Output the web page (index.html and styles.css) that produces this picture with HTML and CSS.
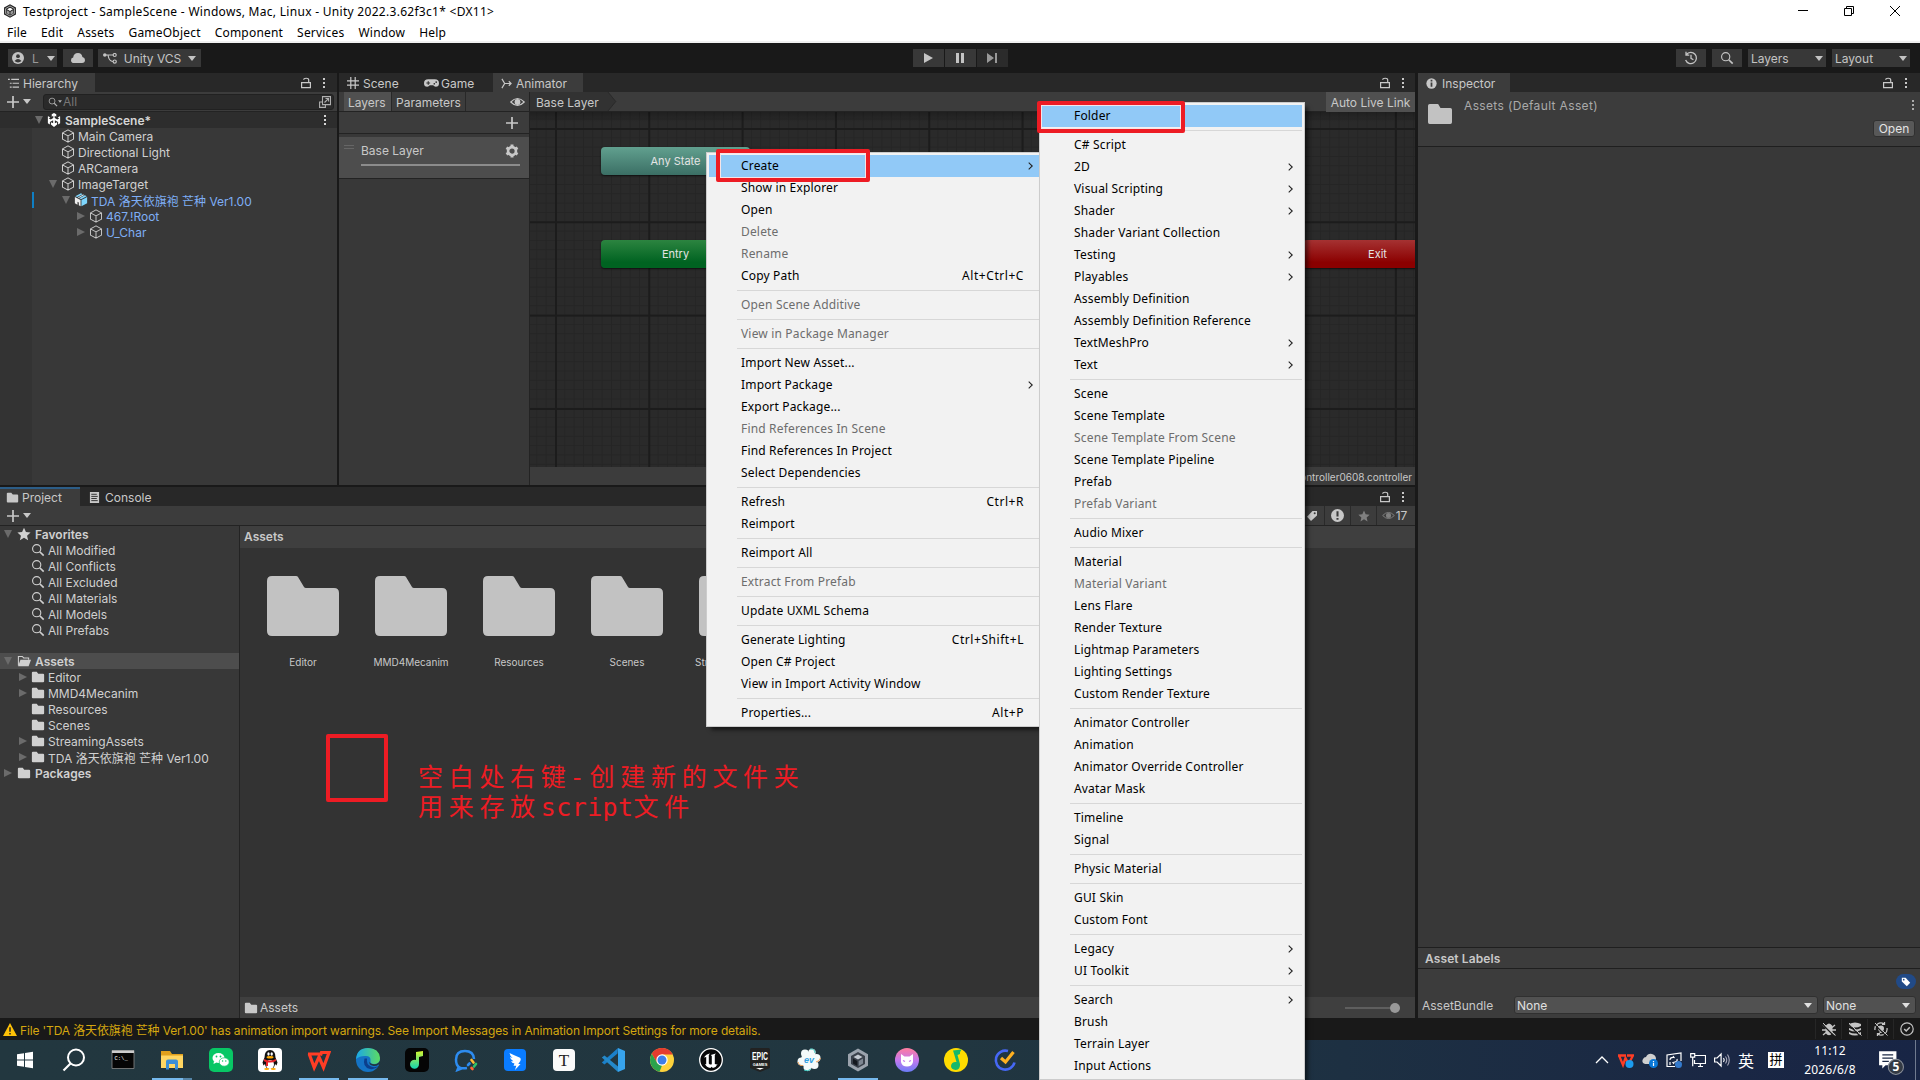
FILE: index.html
```html
<!DOCTYPE html>
<html lang="zh-CN">
<head>
  <meta charset="UTF-8">
  <meta name="viewport" content="width=device-width, initial-scale=1.0">
  <title>Testproject - SampleScene - Unity</title>
  <link rel="stylesheet" href="styles.css">
</head>
<body>
  <!-- icon sprite -->
  <svg class="sprite" aria-hidden="true">
    <symbol id="unity" viewBox="0 0 16 16"><path fill="currentColor" d="M8 0l2.600 1.500v2.700L8.800 3.100v2.700l2.900 1.700 2.400-1.400-1.900-1L14.500 3.800 15 4v7.800l-2.300 1.300v-2.800L9 8.300v3.500l2.500-1.300v2.600L8 16l-3.500-2.900v-2.600L7 11.800V8.300L3.300 10.300v2.800L1 11.800V4l.5-.2 2.300 1.300-1.900 1 2.400 1.400 2.900-1.700V3.100L5.400 4.200V1.500z"/></symbol>
    <symbol id="hex" viewBox="0 0 16 16"><path fill="#222" d="M8 .3l6.800 3.800v7.800L8 15.700 1.200 11.900V4.100z"/><path fill="none" stroke="#bbb" stroke-width="1" d="M8 2.300l5 2.900v5.700l-5 2.900-5-2.900V5.200z"/><path fill="#fff" d="M8 4.200l3.300 1.900L8 8 4.700 6.100z"/><path fill="#999" d="M4.300 7L7.500 8.800v3.600L4.300 10.600zM11.700 7L8.500 8.800v3.600l3.200-1.800z"/></symbol>
    <symbol id="cube" viewBox="0 0 16 16"><path fill="none" stroke="currentColor" stroke-width="1.150" stroke-linejoin="round" d="M8 1l6.300 3.400v7.200L8 15 1.700 11.600V4.400zM1.700 4.400L8 7.800l6.300-3.400M8 7.800V15"/></symbol>
    <symbol id="prefab" viewBox="0 0 16 16"><path fill="#7fd6fd" d="M8.500 8L15 4.500v7.200L8.500 15.200z"/><path fill="#ededed" d="M7.500 8L1 4.500v7.200l3 1.600V10l1.500.8v3.300l2 1.100z"/><path fill="#7fd6fd" d="M1.500 3.600L8 .3l1.800 1L3.600 4.700zM6.200 6L12.400 2.700l2.100 1L8 7.100z"/><path fill="#d8f2fd" d="M4.300 5L10.500 1.700l1.200.6L5.500 5.600z"/></symbol>
    <symbol id="folder" viewBox="0 0 16 16"><path fill="currentColor" d="M1 3.200Q1 2 2.200 2h4.300l1.800 2.200h5.500q1.200 0 1.200 1.200v7.400q0 1.200-1.200 1.200H2.200Q1 14 1 12.800z"/></symbol>
    <symbol id="folder-open" viewBox="0 0 16 16"><path fill="none" stroke="currentColor" stroke-width="1.200" d="M1.600 13V2.800h4.500l1.500 1.700h5.700v2"/><path fill="currentColor" d="M4 6.600h12L13.300 14H1.200z"/></symbol>
    <symbol id="big-folder" viewBox="0 0 72 60"><path fill="#c2c2c2" d="M0 5q0-5 5-5h24q1.500 0 2 1l6 10q.6 1 2 1h28q5 0 5 5v38q0 5-5 5H5q-5 0-5-5z"/></symbol>
    <symbol id="search" viewBox="0 0 16 16"><circle cx="6.500" cy="6.500" r="4.700" fill="none" stroke="currentColor" stroke-width="1.300"/><path stroke="currentColor" stroke-width="1.900" d="M10 10l4.500 4.500"/></symbol>
    <symbol id="star" viewBox="0 0 16 16"><path fill="currentColor" d="M8 .8l2.200 5 5.300.5-4 3.600 1.200 5.300L8 12.400l-4.700 2.800 1.200-5.300-4-3.600 5.300-.5z"/></symbol>
    <symbol id="lock" viewBox="0 0 12 12"><path fill="none" stroke="currentColor" stroke-width="1.200" d="M1.600 5.600h8.800v5H1.600zM3.700 2.800C3.700.8 8.700.6 8.700 3v2.600"/></symbol>
    <symbol id="dots" viewBox="0 0 4 12"><path fill="currentColor" d="M1 1h2v2H1zM1 5h2v2H1zM1 9h2v2H1z"/></symbol>
    <symbol id="plus" viewBox="0 0 12 12"><path stroke="currentColor" stroke-width="1.700" d="M6 0v12M0 6h12"/></symbol>
    <symbol id="down" viewBox="0 0 8 5"><path fill="currentColor" d="M0 0h8L4 5z"/></symbol>
    <symbol id="list" viewBox="0 0 12 12"><path stroke="currentColor" stroke-width="1.200" d="M0 1.500h2M3.500 1.500H12M2 5.800h2M5 5.800h7M2 10h2M5 10h7"/></symbol>
    <symbol id="grid" viewBox="0 0 12 12"><path stroke="currentColor" stroke-width="1.200" d="M3.800 0v12M8.200 0v12M0 3.800h12M0 8.200h12"/></symbol>
    <symbol id="pad" viewBox="0 0 16 10"><path fill="currentColor" d="M4.500 1h7Q16 1 16 5.200 16 9 12.500 9 10.800 9 9.800 7.500H6.200Q5.200 9 3.500 9 0 9 0 5.200 0 1 4.500 1z"/><path stroke="#282828" d="M4.500 3v4M2.500 5h4"/><circle cx="11" cy="5.800" r=".9" fill="#282828"/><circle cx="13" cy="4" r=".9" fill="#282828"/></symbol>
    <symbol id="animator" viewBox="0 0 12 12"><path fill="none" stroke="currentColor" stroke-width="1.300" d="M1 1l3 5-3 5M4 6h7M8.500 3.500L11 6 8.500 8.500"/></symbol>
    <symbol id="eye" viewBox="0 0 16 10"><path fill="none" stroke="currentColor" stroke-width="1.200" d="M.8 5Q8-2.500 15.200 5 8 12.500.8 5z"/><circle cx="8" cy="5" r="3.100" fill="currentColor"/></symbol>
    <symbol id="gear" viewBox="0 0 16 16"><circle cx="8" cy="8" r="4.500" fill="none" stroke="currentColor" stroke-width="3"/><path stroke="currentColor" stroke-width="3.400" d="M8 .6v3M8 12.400v3M1.600 4.300l2.600 1.500M11.800 10.200l2.600 1.500M1.600 11.700l2.600-1.500M11.800 5.800l2.600-1.500"/></symbol>
    <symbol id="user" viewBox="0 0 12 12"><circle cx="6" cy="6" r="6" fill="currentColor"/><circle cx="6" cy="4.200" r="1.900" fill="#383838"/><path fill="#383838" d="M2.500 9Q6 5.200 9.500 9 6 11.800 2.500 9z"/></symbol>
    <symbol id="cloud" viewBox="0 0 14 10"><path fill="currentColor" d="M3 10Q0 10 0 7.200 0 5 2.200 4.600 2.600 0 7 0q3.800 0 4.400 4Q14 4.600 14 7q0 3-3 3z"/></symbol>
    <symbol id="branch" viewBox="0 0 14 11"><g fill="none" stroke="currentColor" stroke-width="1.200"><path d="M2 2h8M5 2q1 6.500 5 6.500"/><circle cx="11.700" cy="2" r="1.500"/><circle cx="11.700" cy="8.600" r="1.600"/></g><circle cx="1.800" cy="2" r="1.800" fill="currentColor"/></symbol>
    <symbol id="history" viewBox="0 0 14 14"><path fill="none" stroke="currentColor" stroke-width="1.300" d="M2.400 3.500A5.600 5.600 0 1 1 1.600 9M2 .8v3.400h3.300M7 3.800v3.600l2.400 1.400"/></symbol>
    <symbol id="info" viewBox="0 0 12 12"><circle cx="6" cy="6" r="5.600" fill="currentColor"/><path stroke="#3c3c3c" stroke-width="1.900" d="M6 2v1.800M6 5v4.600"/></symbol>
    <symbol id="alert" viewBox="0 0 12 12"><circle cx="6" cy="6" r="6" fill="currentColor"/><path stroke="#3c3c3c" stroke-width="1.900" d="M6 2v5M6 8.200V10"/></symbol>
    <symbol id="tag" viewBox="0 0 12 12"><path fill="currentColor" d="M1 1h4.500L11 6.800 7 11 1 5.500z"/><circle cx="3.300" cy="3.200" r="1" fill="#214a87"/></symbol>
    <symbol id="tag-flip" viewBox="0 0 12 12"><path fill="currentColor" d="M11 1H6.500L1 6.800 5 11l6-5.500z"/><circle cx="8.700" cy="3.200" r="1" fill="#3c3c3c"/></symbol>
    <symbol id="doc" viewBox="0 0 12 12"><path fill="currentColor" d="M1 0h10v12H1z"/><path stroke="#282828" d="M2.500 2.500h6M2.500 4.800h7M2.500 7.100h6M2.500 9.400h7"/></symbol>
    <symbol id="popout" viewBox="0 0 12 12"><path fill="none" stroke="currentColor" stroke-width="1.100" d="M3.500.6h8v8h-8zM3.500 6H.6v5.400h5.800V8.600M5.500 6.500L9.500 2.600M6.500 2.500h3.100v3"/></symbol>
    <symbol id="warn" viewBox="0 0 14 13"><path fill="#ffc107" d="M7 0l7 13H0z"/><path stroke="#222" stroke-width="1.500" d="M7 4.200v4.500M7 10v1.600"/></symbol>
    <symbol id="bug-off" viewBox="0 0 14 14"><path fill="currentColor" d="M3.500 4q3.500-5 7 0v7q-3.500 4.500-7 0z"/><path stroke="currentColor" stroke-width="1.300" d="M1 3l3 2.500M0 8h4M1 13l3-2.500M13 3l-3 2.500M14 8h-4M13 13l-3-2.500"/><path stroke="#191919" stroke-width="1.200" d="M0 2l12 12"/><path stroke="currentColor" d="M1 1l12.500 12.500"/></symbol>
    <symbol id="db-off" viewBox="0 0 14 14"><path fill="currentColor" d="M1 2q6-3 12 0v2q-6 3-12 0zM1 6q6 3 12 0v2q-6 3-12 0zM1 10q6 3 12 0v2q-6 3-12 0z"/><path stroke="#191919" stroke-width="1.200" d="M0 2l12 12"/><path stroke="currentColor" d="M1 1l12.500 12.500"/></symbol>
    <symbol id="bulb-off" viewBox="0 0 14 14"><path fill="none" stroke="currentColor" stroke-width="1.300" d="M1 8a6 6 0 0 1 9-6.200M13 6a6 6 0 0 1-9 6.200M10.500 0v2.300H8M3.500 14v-2.300H6"/><circle cx="7" cy="6.500" r="3" fill="currentColor"/><path fill="currentColor" d="M5.500 9h3v2h-3z"/><path stroke="#191919" stroke-width="1.200" d="M0 2l12 12"/><path stroke="currentColor" d="M1 1l12.500 12.500"/></symbol>
    <symbol id="check-circle" viewBox="0 0 14 14"><circle cx="7" cy="7" r="6.200" fill="none" stroke="currentColor" stroke-width="1.200"/><path fill="none" stroke="currentColor" stroke-width="1.500" d="M4.200 7l2 2 3.600-3.800"/></symbol>
  </svg>

  <div class="window">
    <div class="titlebar">
      <svg class="i14"><use href="#hex"/></svg>
      <span class="title">Testproject - SampleScene - Windows, Mac, Linux - Unity 2022.3.62f3c1* &lt;DX11&gt;</span>
      <svg class="win-btn" viewBox="0 0 12 12"><path stroke="#000" d="M1 5.500h10"/></svg>
      <svg class="win-btn" viewBox="0 0 12 12"><path fill="none" stroke="#000" d="M1.500 3.500h7v7h-7zM3.500 3.500v-2h7v7h-2"/></svg>
      <svg class="win-btn" viewBox="0 0 12 12"><path stroke="#000" d="M1 1l10 10M11 1L1 11"/></svg>
    </div>
    <nav class="menubar"><span>File</span><span>Edit</span><span>Assets</span><span>GameObject</span><span>Component</span><span>Services</span><span>Window</span><span>Help</span></nav>

    <div class="toolbar">
      <div class="tool-side">
        <button class="tb account"><svg class="i12"><use href="#user"/></svg>L<svg class="arrow"><use href="#down"/></svg></button>
        <button class="tb cloud"><svg class="cloud-ico"><use href="#cloud"/></svg></button>
        <button class="tb vcs"><svg class="branch-ico"><use href="#branch"/></svg>Unity VCS<svg class="arrow"><use href="#down"/></svg></button>
      </div>
      <div class="play">
        <button class="tb"><svg viewBox="0 0 12 12" class="i12"><path fill="#c4c4c4" d="M2 1l9 5-9 5z"/></svg></button>
        <button class="tb"><svg viewBox="0 0 12 12" class="i12"><path fill="#c4c4c4" d="M2 1h3v10H2zM7 1h3v10H7z"/></svg></button>
        <button class="tb off"><svg viewBox="0 0 12 12" class="i12"><path fill="#999" d="M1 1l7 5-7 5zM9 1h2v10H9z"/></svg></button>
      </div>
      <div class="tool-side right">
        <button class="tb sq"><svg class="i14"><use href="#history"/></svg></button>
        <button class="tb sq"><svg class="i14"><use href="#search"/></svg></button>
        <button class="tb drop">Layers<svg class="arrow"><use href="#down"/></svg></button>
        <button class="tb drop">Layout<svg class="arrow"><use href="#down"/></svg></button>
      </div>
    </div>

    <div class="workspace">
      <div class="left">
        <div class="upper">
          <section class="panel hierarchy">
            <div class="tabs">
              <div class="tab active"><svg class="i11"><use href="#list"/></svg>Hierarchy</div>
              <svg class="lock"><use href="#lock"/></svg><svg class="dots"><use href="#dots"/></svg>
            </div>
            <div class="bar">
              <svg class="plus"><use href="#plus"/></svg><svg class="arrow"><use href="#down"/></svg>
              <div class="search"><svg class="i10"><use href="#search"/></svg><svg class="tiny"><use href="#down"/></svg><span>All</span><svg class="pop"><use href="#popout"/></svg></div>
            </div>
            <div class="scene-row"><i class="fold open"></i><svg class="i14 white"><use href="#unity"/></svg><b>SampleScene*</b><svg class="dots"><use href="#dots"/></svg></div>
            <div class="tree" id="hierarchy"></div>
          </section>

          <section class="panel animator">
            <div class="tabs">
              <div class="tab scene"><svg class="i12"><use href="#grid"/></svg>Scene</div>
              <div class="tab game"><svg class="pad"><use href="#pad"/></svg>Game</div>
              <div class="tab active anim"><svg class="i11"><use href="#animator"/></svg>Animator</div>
              <svg class="lock"><use href="#lock"/></svg><svg class="dots"><use href="#dots"/></svg>
            </div>
            <div class="anim-body">
              <div class="layers">
                <div class="bar layer-tabs"><span class="on">Layers</span><span>Parameters</span><svg class="eye"><use href="#eye"/></svg></div>
                <div class="add-row"><svg class="plus"><use href="#plus"/></svg></div>
                <div class="layer">
                  <div class="layer-top"><i class="grip"></i>Base Layer<svg class="i14"><use href="#gear"/></svg></div>
                  <div class="weight"></div>
                </div>
              </div>
              <div class="graph">
                <div class="bar crumbs"><span class="crumb">Base Layer</span><svg class="crumb-end" viewBox="0 0 12 20"><path fill="#323232" stroke="#292929" d="M-2-1h4l9 11-9 11h-4z"/></svg><span class="live">Auto Live Link</span></div>
                <div class="canvas">
                  <div class="node any">Any State</div>
                  <div class="node entry">Entry</div>
                  <div class="node exit">Exit</div>
                </div>
                <div class="path">New Animator Controller0608.controller</div>
              </div>
            </div>
          </section>
        </div>

        <section class="panel project">
          <div class="tabs">
            <div class="tab active focus"><svg class="i13"><use href="#folder"/></svg>Project</div>
            <div class="tab console"><svg class="i11"><use href="#doc"/></svg>Console</div>
            <svg class="lock"><use href="#lock"/></svg><svg class="dots"><use href="#dots"/></svg>
          </div>
          <div class="bar">
            <svg class="plus"><use href="#plus"/></svg><svg class="arrow"><use href="#down"/></svg>
            <div class="filters">
              <span><svg class="i12"><use href="#tag-flip"/></svg></span><span><svg class="i13"><use href="#alert"/></svg></span><span class="dim"><svg class="i12"><use href="#star"/></svg></span><span class="wide"><svg class="eye2"><use href="#eye"/></svg>17</span>
            </div>
          </div>
          <div class="project-body">
            <div class="tree" id="project"></div>
            <div class="assets">
              <div class="assets-head">Assets</div>
              <div class="folders" id="folders"></div>
              <div class="assets-foot"><svg class="i14"><use href="#folder"/></svg>Assets<div class="slider"><i></i></div></div>
            </div>
          </div>
        </section>
      </div>

      <section class="panel inspector">
        <div class="tabs">
          <div class="tab active"><svg class="i11"><use href="#info"/></svg>Inspector</div>
          <svg class="lock"><use href="#lock"/></svg><svg class="dots"><use href="#dots"/></svg>
        </div>
        <div class="asset-head">
          <svg class="asset-ico" viewBox="0 0 72 60" preserveAspectRatio="none"><use href="#big-folder"/></svg>
          <span class="asset-name">Assets (Default Asset)</span>
          <div class="asset-side"><svg class="dots"><use href="#dots"/></svg><button class="open-btn">Open</button></div>
        </div>
        <div class="fill"></div>
        <div class="labels-head">Asset Labels</div>
        <div class="labels">
          <span class="label-tag"><svg class="i10"><use href="#tag"/></svg></span>
          <div class="bundle"><span>AssetBundle</span><div class="select main">None<svg class="arrow"><use href="#down"/></svg></div><div class="select">None<svg class="arrow"><use href="#down"/></svg></div></div>
        </div>
      </section>
    </div>

    <div class="status">
      <svg class="warn"><use href="#warn"/></svg><span>File 'TDA 洛天依旗袍 芒种 Ver1.00' has animation import warnings. See Import Messages in Animation Import Settings for more details.</span>
      <div class="status-icons"><i><svg class="i14"><use href="#bug-off"/></svg></i><i><svg class="i14"><use href="#db-off"/></svg></i><i><svg class="i14"><use href="#bulb-off"/></svg></i><i><svg class="i14"><use href="#check-circle"/></svg></i></div>
    </div>

    <footer class="taskbar">
      <div class="app"><svg viewBox="0 0 24 24"><path fill="#fff" d="M4 6.200l7-1v6.300H4zM12 5l8-1.200v7.700h-8zM4 12.500h7v6.300l-7-1zM12 12.500h8v7.700L12 19z"/></svg></div>
      <div class="app"><svg viewBox="0 0 24 24"><circle cx="14" cy="9.500" r="8" fill="none" stroke="#fff" stroke-width="2"/><path stroke="#fff" stroke-width="2.200" d="M8.500 15.500L1.500 22.500"/></svg></div>
      <div class="app"><svg viewBox="0 0 24 24"><path fill="#050505" stroke="#888" stroke-width=".8" d="M1 2.500h22v18H1z"/><path fill="#ccc" d="M1 2.500h22V5H1z"/><text x="3.500" y="11.500" font-size="5.500" fill="#fff" font-family="Liberation Mono">C:\_</text></svg></div>
      <div class="app run multi"><svg viewBox="0 0 24 24"><path fill="#e0a01c" d="M1 3h9l2 3h11v5H1z"/><path fill="#ffd662" d="M1 7.500h22V20H1z"/><path fill="#3b8ed6" d="M6 21.500v-8q0-2 2-2h8q2 0 2 2v8h-3V16H9v5.500z"/></svg></div>
      <div class="app"><svg viewBox="0 0 24 24"><rect width="24" height="24" rx="5" fill="#08c765"/><ellipse cx="9.500" cy="10" rx="6" ry="5" fill="#fff"/><path fill="#fff" d="M5 13l-.5 3 3-1.500z"/><ellipse cx="15.200" cy="14" rx="5" ry="4.200" fill="#fff" stroke="#08c765" stroke-width=".7"/><g fill="#08c765"><circle cx="7.500" cy="8.500" r=".9"/><circle cx="11.500" cy="8.500" r=".9"/><circle cx="13.600" cy="13" r=".7"/><circle cx="16.800" cy="13" r=".7"/></g></svg></div>
      <div class="app"><svg viewBox="0 0 24 24"><rect width="24" height="24" rx="4" fill="#fff"/><path fill="#111" d="M6.500 9.500Q6.500 2 12 2t5.500 7.500l2 5-1 3-1.500-1.500q-.5 5-5 5t-5-5L5.500 17.500l-1-3z"/><ellipse cx="12" cy="16.500" rx="4" ry="4.500" fill="#fff"/><path fill="#e8232a" d="M6 11q6 3 12 0v2q-3 2-8 1.500V18H8v-4q-2-.5-2-1z"/><ellipse cx="12" cy="9.300" rx="3.500" ry="1.300" fill="#fa0"/><ellipse cx="10.500" cy="6" rx="1.200" ry="1.800" fill="#fff"/><ellipse cx="13.700" cy="6" rx="1.200" ry="1.800" fill="#fff"/><ellipse cx="8.700" cy="21" rx="2.500" ry="1" fill="#fa0"/><ellipse cx="15.300" cy="21" rx="2.500" ry="1" fill="#fa0"/></svg></div>
      <div class="app run"><svg viewBox="0 0 24 24"><path fill="none" stroke="#ff3d25" stroke-width="3.200" d="M1 6h12M2.200 6l5 13.500L12 9l4.500 10.500L22 4.500h-7.500l-1 3"/></svg></div>
      <div class="app run"><svg viewBox="0 0 24 24"><defs><linearGradient id="edge-a" x2="1"><stop stop-color="#1aa7e8"/><stop offset="1" stop-color="#5ddb62"/></linearGradient></defs><circle cx="12" cy="12" r="12" fill="#1473c5"/><path fill="url(#edge-a)" d="M0 11Q1 0 12 0t12 10q0 6-6 6-4 0-3.500-3Q15 8 10 8 4 7.500 0 11z"/><path fill="#0c3f8c" d="M8.500 10.500Q6 19 14 21q5 1 8.500-3Q19 20 15 18.500q-5-2-4-8z"/><path fill="#22363f" d="M13.500 13.500q-1 3.500 4 4.500 3 .2 5.300-1.500l1.200 1v-5q-2 4-6 3.700-4 0-4.500-2.700z"/></svg></div>
      <div class="app"><svg viewBox="0 0 24 24"><defs><linearGradient id="note" x2="0" y2="1"><stop stop-color="#d4f52e"/><stop offset="1" stop-color="#10d3b2"/></linearGradient></defs><rect width="24" height="24" rx="5" fill="#050505"/><path fill="url(#note)" d="M11 4l7-1v5l-4 1v7a4.500 4.500 0 1 1-3-4z"/></svg></div>
      <div class="app"><svg viewBox="0 0 24 24"><path fill="none" stroke="#2d8cf0" stroke-width="2.500" d="M13 20Q2 22 2 11.500 2 3 11 3q8.500 0 9 8M5 18l-1.500 4 5-2"/><g stroke-width="2.600" fill="none" stroke-linecap="round"><path stroke="#fb3" d="M17.500 12l2 2.500"/><path stroke="#2ec26b" d="M22 16l-2 2.500"/><path stroke="#f63" d="M18.500 21l-1-1"/><path stroke="#2d8cf0" d="M14 17l1.500-1.500"/></g></svg></div>
      <div class="app"><svg viewBox="0 0 24 24"><rect x="1" y="1" width="22" height="22" rx="4" fill="#0a7cff"/><path fill="#fff" d="M6.500 5q5 2.500 10 4.500 2 1 .8 3.500l-2 3h2.200L12 22l1.300-4.200H10.500l1-2.200q-2.700-.6-3.500-2.600 1.500.4 2.400.2Q7.300 11.500 7 9l2.500 1Q7 8 6.500 5z"/></svg></div>
      <div class="app"><svg viewBox="0 0 24 24"><rect x="1" y="1" width="22" height="22" rx="4" fill="#fafafa"/><text x="12" y="18" text-anchor="middle" font-size="17" fill="#222" font-family="Liberation Serif">T</text></svg></div>
      <div class="app"><svg viewBox="0 0 24 24"><path fill="#1b80ca" d="M17 0l-.5 5.500L3.500 16.500.8 14.500z"/><path fill="#2489ca" d="M.8 9.500l2.700-2L17 18.500V24z"/><path fill="#37a3ec" d="M17 0l7 3v18l-7 3z"/></svg></div>
      <div class="app"><svg viewBox="0 0 24 24"><circle cx="12" cy="12" r="12" fill="#fdd23c"/><path fill="#e33b2e" d="M12 12V6.500h10.700A12 12 0 0 0 1.800 5.700L7 15z"/><path fill="#2ba24c" d="M1.800 5.700L7.200 15 12 17.500 9.500 23.700A12 12 0 0 1 1.800 5.700z"/><circle cx="12" cy="12" r="5.700" fill="#fff"/><circle cx="12" cy="12" r="4.500" fill="#3c7de8"/></svg></div>
      <div class="app"><svg viewBox="0 0 24 24"><circle cx="12" cy="12" r="11.300" fill="#080808" stroke="#fff" stroke-width="1.300"/><path fill="#fff" d="M5 9.500Q7 6 11 5.500L9.800 7v8.500q1 1.800 3 .7V8l-1-1 5-1.500-1 1.500v9l2 .5 1-.8q-1.500 3.500-5 4.300l-1-1.200-1.500 1.200Q7.500 19.500 6 16l1.200.2V9z"/></svg></div>
      <div class="app"><svg viewBox="0 0 24 24"><path fill="#222" d="M2 1.500Q2 0 3.500 0h17Q22 0 22 1.500V20l-10 4-10-4z"/><text x="12" y="12" text-anchor="middle" font-size="10" font-weight="bold" fill="#fff" textLength="16" lengthAdjust="spacingAndGlyphs" font-family="Liberation Sans">EPIC</text><text x="12" y="17.500" text-anchor="middle" font-size="4" font-weight="bold" fill="#fff" font-family="Liberation Sans">GAMES</text><path fill="#fff" d="M8 20h8l-4 1.700z"/></svg></div>
      <div class="app"><svg viewBox="0 0 24 24"><g fill="#f4fafa"><circle cx="8" cy="5.500" r="4"/><circle cx="15" cy="4.500" r="3.700"/><circle cx="19.500" cy="10" r="4"/><circle cx="17.500" cy="17" r="4"/><circle cx="10.500" cy="19" r="4"/><circle cx="4.500" cy="13.500" r="4"/><circle cx="12" cy="12" r="8"/></g><path fill="none" stroke="#f2a257" d="M1 14q1 4 5 3.500M19 14q4-1 4.500-4"/><path fill="none" stroke="#3cc6bd" d="M13 1q5-.5 5 4M7 22q4 2 7-1"/><text x="12" y="15" text-anchor="middle" font-size="9" font-style="italic" font-weight="bold" fill="#2f9fe0" font-family="Liberation Sans">ev</text></svg></div>
      <div class="app run"><svg viewBox="0 0 24 24"><path fill="#9ba3ad" d="M12 .5l10 5.700v11.600l-10 5.700-10-5.700V6.200z"/><path fill="#3a414b" d="M12 4l7 4v8l-7 4-7-4V8z"/><path fill="#c3c9d0" d="M12 6.500l4.500 2.600L12 11.600 7.500 9.100z"/><path fill="#15191f" d="M7 10.500l4.300 2.400v5L7 15.500z"/><path fill="#7e8792" d="M17 10.500l-4.300 2.400v5l4.300-2.400z"/></svg></div>
      <div class="app"><svg viewBox="0 0 24 24"><defs><linearGradient id="cat" x2="0" y2="1"><stop stop-color="#ff7d9d"/><stop offset=".5" stop-color="#c678ee"/><stop offset="1" stop-color="#6a7cf8"/></linearGradient></defs><circle cx="12" cy="12" r="12" fill="url(#cat)"/><path fill="#fff" d="M6 6l3.500 2.500h5L18 6v8q-1 4.500-6 4.500T6 14z"/><path stroke="#c678ee" stroke-width="1.300" d="M8 12.500l2 1M16 12.500l-2 1"/></svg></div>
      <div class="app"><svg viewBox="0 0 24 24"><circle cx="12" cy="12" r="12" fill="#ffdc00"/><path fill="#15b86a" d="M9 2.500l8.500-1Q15.500 4 16 6l-2.500 1 2.500 9q.5 5.500-4.300 6-4.700-.5-4.700-4 .5-4.500 5.500-4z"/></svg></div>
      <div class="app"><svg viewBox="0 0 24 24"><path fill="none" stroke="#4668f5" stroke-width="2.600" d="M15 3A9.500 9.500 0 1 0 21.500 14.500"/><path fill="none" stroke="#ffb020" stroke-width="3.200" d="M8 10l4.500 4L20.500 4"/></svg></div>

      <div class="tray">
        <svg viewBox="0 0 16 16"><path fill="none" stroke="#fff" stroke-width="1.300" d="M2 11l6-6 6 6"/></svg>
        <svg viewBox="0 0 16 16"><path fill="none" stroke="#ff3d25" stroke-width="2.300" d="M0 3.500h8M1 3.500L5 13l2.500-7 3 6L15 3.500H9"/><circle cx="11.500" cy="12" r="4" fill="#1c9cf0"/></svg>
        <svg viewBox="0 0 16 16"><path fill="#cfcfcf" d="M3 12Q-1 11 1 7q1-2 3-2 2-4 6-3 4 1 4 5l-2 5z"/><circle cx="11.500" cy="11.500" r="4.500" fill="#0a78d7"/><path stroke="#fff" stroke-width="1.200" d="M11.500 9v1.200M11.500 11v3"/></svg>
        <svg viewBox="0 0 16 16"><path fill="none" stroke="#fff" stroke-width="1.200" d="M9 14.500H1V3l14-2v8M4 8q0-3 4-2.500L7 4M11 7q1 3-4 3.500L8 12M4 10v3"/><circle cx="12.500" cy="12.500" r="3.500" fill="#3379cc"/></svg>
        <svg viewBox="0 0 16 16"><path fill="none" stroke="#fff" stroke-width="1.200" d="M5 3.500h10.500v8H4.500V8M8 14.500h5M10.300 11.500v3M.7 1.700h4v3.500h-4zM2.700 5.200v9"/></svg>
        <svg viewBox="0 0 16 16"><path fill="none" stroke="#fff" stroke-width="1.200" d="M.6 6h2.500l4-4v12l-4-4H.6zM9.500 6q1.500 2 0 4"/><path fill="none" stroke="#aab" stroke-width="1.100" d="M11.500 4.500q2.500 3.500 0 7M13.500 2.500q3.500 5.500 0 11"/></svg>
        <span class="ime">英</span>
        <span class="pin">拼</span>
      </div>
      <div class="clock"><span>11:12</span><span>2026/6/8</span></div>
      <div class="notify"><svg viewBox="0 0 24 24"><path fill="#fff" d="M1 2h16v13H7l-3 3v-3H1z"/><path stroke="#1b2844" stroke-width="1.200" d="M4 5.500h10M4 8.500h10M4 11.500h6"/><circle cx="16.500" cy="16.500" r="7" fill="#333a44" stroke="#888e98"/><text x="16.500" y="20.500" text-anchor="middle" font-size="11" font-weight="bold" fill="#fff" font-family="Noto Sans">5</text></svg></div>
    </footer>
  </div>

  <!-- context menus -->
  <div class="menu main-menu" id="contextMenu"></div>
  <div class="menu sub-menu" id="createMenu"></div>

  <!-- red annotations -->
  <div class="mark mark-create"></div>
  <div class="mark mark-folder"></div>
  <div class="mark mark-blank"></div>
  <div class="note"><div>空白处右键<span class="dash">-</span>创建新的文件夹</div><div>用来存放<span class="latin">script</span>文件</div></div>

  <script src="script.js"></script>
</body>
</html>
```
FILE: styles.css
```css
* {
  box-sizing: border-box;
}
body {
  margin: 0;
  width: 1920px;
  height: 1080px;
  overflow: hidden;
  position: relative;
  background: #191919;
  color: #c8c8c8;
  font-family: Inter, "Noto Sans CJK SC", sans-serif;
  font-size: 12px;
}
button {
  border: none;
  padding: 0;
  font: inherit;
  color: inherit;
}
svg {
  flex: none;
  display: block;
}
.sprite {
  position: absolute;
  width: 0;
  height: 0;
}
.i10 { width: 10px; height: 10px; }
.i11 { width: 11px; height: 11px; }
.i12 { width: 12px; height: 12px; }
.i13 { width: 13px; height: 13px; }
.i14 { width: 14px; height: 14px; }
.arrow { width: 8px; height: 5px; }
.lock { width: 12px; height: 12px; }
.dots { width: 4px; height: 12px; }
.plus { width: 12px; height: 12px; }
.white { color: #fff; }

.window {
  height: 1080px;
  display: flex;
  flex-direction: column;
}

/* title + menu bar */
.titlebar, .menubar {
  background: #fff;
  color: #000;
  font-family: "Noto Sans", "Noto Sans CJK SC", sans-serif;
  display: flex;
  align-items: center;
  white-space: pre;
}
.titlebar {
  height: 23px;
  padding: 0 19px 1px 3px;
}
.title {
  margin-left: 6px;
  flex: 1;
  letter-spacing: 0.29px;
}
.win-btn {
  width: 12px;
  height: 12px;
  margin-left: 34px;
}
.menubar {
  height: 20px;
  padding-left: 0;
  border-bottom: 2px solid #f0f0f0;
  letter-spacing: 0.2px;
}
.menubar span {
  padding: 0 7px;
}

/* main toolbar */
.toolbar {
  height: 30px;
  background: #191919;
  display: flex;
  padding: 0 10px 0 8px;
  align-items: center;
}
.tool-side {
  flex: 1;
  display: flex;
  gap: 6px;
}
.tool-side.right {
  justify-content: flex-end;
}
.tb {
  height: 18px;
  background: #383838;
  color: #c4c4c4;
  display: flex;
  align-items: center;
  justify-content: center;
}
.account {
  width: 49px;
  gap: 8px;
  color: #999;
}
.account svg, .vcs svg, .cloud svg { color: #c4c4c4; }
.account .i12 { margin-left: 2px; }
.cloud { width: 30px; }
.cloud-ico { width: 14px; height: 10px; }
.vcs {
  width: 103px;
  gap: 7px;
  margin-left: -1px;
}
.branch-ico { width: 14px; height: 11px; }
.play {
  display: flex;
  gap: 1px;
  margin-left: 2px;
}
.play .tb { width: 31px; }
.play .off { background: #2b2b2b; }
.sq { width: 30px; }
.drop {
  width: 78px;
  justify-content: space-between;
  padding: 0 3px;
}

/* docked panels */
.workspace {
  display: flex;
  height: 945px;
  gap: 3px;
}
.left {
  width: 1415px;
  display: flex;
  flex-direction: column;
  gap: 2px;
}
.upper {
  height: 412px;
  display: flex;
  gap: 2px;
}
.panel {
  background: #383838;
  display: flex;
  flex-direction: column;
  overflow: hidden;
}
.tabs {
  height: 19px;
  flex: none;
  background: #282828;
  display: flex;
  align-items: center;
  padding-right: 10px;
}
.tab {
  height: 19px;
  display: flex;
  align-items: center;
  gap: 5px;
  padding: 1px 0 0 8px;
}
.tab.active {
  background: #3c3c3c;
}
.tabs .lock {
  margin-left: auto;
  margin-right: 10px;
}
.bar {
  height: 20px;
  flex: none;
  background: #3c3c3c;
  border-bottom: 1px solid #232323;
  display: flex;
  align-items: center;
}
.fold {
  width: 8px;
  height: 8px;
  flex: none;
  background: #6b6b6b;
  clip-path: polygon(0 0, 100% 50%, 0 100%);
}
.fold.open {
  clip-path: polygon(0 0, 100% 0, 50% 100%);
}
.fold.none {
  background: none;
}

/* hierarchy */
.hierarchy { width: 337px; }
.hierarchy .tab { width: 95px; gap: 4px; }
.hierarchy .tabs { padding-right: 11px; }
.hierarchy .bar { padding-left: 7px; }
.hierarchy .bar > .arrow { margin: 0 12px 0 4px; }
.search {
  width: 291px;
  height: 16px;
  background: #2a2a2a;
  border: 1px solid #212121;
  border-radius: 3px;
  display: flex;
  align-items: center;
  padding: 0 2px 0 4px;
  color: #777;
}
.search svg { color: #b0b0b0; }
.search .tiny { width: 4px; height: 3px; }
.search span { margin-left: 1px; flex: 1; }
.search .pop { width: 12px; height: 12px; }
.scene-row {
  height: 17px;
  flex: none;
  background: #2d2d2d;
  border-bottom: 1px solid #3a3a3a;
  display: flex;
  align-items: center;
  gap: 4px;
  padding: 0 10px 0 35px;
  color: #d6d6d6;
}
.scene-row .dots { margin-left: auto; }
.scene-row .white { margin: 0; }
.scene-row b { font-weight: 600; }
.hierarchy .tree {
  flex: 1;
  margin-top: -1px;
  background: linear-gradient(90deg, #333 32px, #383838 32px);
}
.row {
  height: 16px;
  display: flex;
  align-items: center;
  white-space: pre;
  color: #d0d0d0;
}
.row svg {
  width: 14px;
  height: 14px;
  margin: 0 3px 0 4px;
}
.row.link { color: #7eaef5; }
.row.link svg { color: #c4c4c4; }
.row.changed { box-shadow: inset 2px 0 #0f7fc4; margin-left: 32px; }
.row.lvl0 { padding-left: 4px; font-weight: 600; }
.row.lvl1 { padding-left: 19px; }
.row.lvl3 { padding-left: 49px; }
.row.lvl4 { padding-left: 30px; }
.row.lvl5 { padding-left: 77px; }
.row.gap { margin-top: 15px; }
.row.selected { background: #4d4d4d; }

/* animator */
.animator { width: 1076px; }
.animator .scene { width: 76px; gap: 4px; }
.animator .game { width: 78px; gap: 2px; padding-left: 9px; }
.animator .anim { width: 90px; gap: 4px; }
.pad { width: 15px; height: 10px; }
.anim-body {
  flex: 1;
  display: flex;
}
.layers {
  width: 191px;
  border-right: 1px solid #232323;
}
.layer-tabs { padding-left: 5px; }
.layer-tabs span {
  height: 19px;
  line-height: 21px;
  padding: 0 4px;
  border-right: 1px solid #282828;
}
.layer-tabs .on { background: #505050; width: 48px; }
.eye { width: 15px; height: 10px; margin-left: auto; margin-right: 4px; }
.add-row {
  height: 22px;
  background: #3c3c3c;
  border-bottom: 1px solid #232323;
  display: flex;
  justify-content: flex-end;
  padding: 5px 11px 0 0;
}
.layer {
  height: 42px;
  margin-top: 3px;
  background: #4d4d4d;
  border-bottom: 1px solid #232323;
}
.layer-top {
  height: 27px;
  padding: 0 10px 0 22px;
  display: flex;
  align-items: center;
  gap: 7px;
}
.grip {
  width: 10px;
  height: 4px;
  margin: -7px 0 0 -17px;
  border-top: 1px solid #666;
  border-bottom: 1px solid #666;
}
.layer-top svg { margin-left: auto; }
.weight {
  width: 159px;
  height: 2px;
  margin-left: 22px;
  background: #8c8c8c;
}
.graph {
  flex: 1;
  display: flex;
  flex-direction: column;
}
.crumb {
  width: 75px;
  height: 19px;
  line-height: 21px;
  padding-left: 6px;
  background: #323232;
}
.crumb-end { width: 12px; height: 19px; }
.live {
  margin-left: auto;
  width: 89px;
  height: 20px;
  line-height: 21px;
  text-align: center;
  background: #505050;
}
.canvas {
  flex: 1;
  position: relative;
  overflow: hidden;
  background-color: #2a2a2a;
  background-image:
    linear-gradient(rgba(0, 0, 0, 0.25), transparent 10px),
    linear-gradient(#1c1c1c 2px, transparent 2px),
    linear-gradient(90deg, #1c1c1c 2px, transparent 2px),
    linear-gradient(#252525 1px, transparent 1px),
    linear-gradient(90deg, #252525 1px, transparent 1px);
  background-size: 100% 100%, 93.33px 93.33px, 93.33px 93.33px, 9.333px 9.333px, 9.333px 9.333px;
  background-position: 0 0, 0 16px, 25px 0, 0 16px, 25px 0;
}
.node {
  position: absolute;
  width: 149px;
  height: 28px;
  border-radius: 4px;
  font-size: 11px;
  line-height: 29px;
  text-align: center;
  color: #e4e4e4;
  box-shadow: 0 1px 2px rgba(0, 0, 0, 0.6);
}
.any {
  left: 71px;
  top: 35px;
  background: linear-gradient(#61a08f, #3b6f65);
}
.entry {
  left: 71px;
  top: 128px;
  background: linear-gradient(#2c8440, #006321 80%);
}
.exit {
  left: 773px;
  top: 128px;
  background: linear-gradient(#a53232, #8b0000 80%);
}
.path {
  height: 18px;
  background: #3c3c3c;
  padding-right: 3px;
  text-align: right;
  font-size: 10px;
  line-height: 20px;
}

/* project */
.project {
  flex: 1;
}
.project .tab { padding-left: 6px; gap: 3px; }
.project .focus {
  width: 80px;
  box-shadow: inset 0 2px #2c5d87;
}
.project .console { padding-left: 9px; gap: 5px; }
.project > .bar { padding-left: 7px; }
.project > .bar .arrow { margin-left: 4px; }
.filters {
  margin-left: auto;
  display: flex;
}
.filters span {
  width: 26px;
  height: 19px;
  border-left: 1px solid #2a2a2a;
  display: flex;
  align-items: center;
  justify-content: center;
}
.filters .dim { color: #808080; }
.filters .wide { width: 39px; gap: 1px; padding-right: 3px; }
.eye2 { width: 13px; height: 9px; color: #808080; }
.project-body {
  flex: 1;
  display: flex;
}
.project .tree {
  width: 240px;
  border-right: 1px solid #232323;
}
.project .row svg { margin: 0 3px; }
.project .lvl0 svg { margin: 0 4px 0 5px; }
.project .lvl1 svg { margin-left: 4px; }
.assets {
  flex: 1;
  background: #333;
  display: flex;
  flex-direction: column;
}
.assets-head {
  height: 22px;
  line-height: 22px;
  padding-left: 4px;
  background: #3f3f3f;
  font-weight: 600;
}
.folders {
  flex: 1;
  display: flex;
  padding: 28px 0 0 9px;
}
.folder {
  width: 108px;
  text-align: center;
  font-size: 10px;
}
.folder svg {
  width: 72px;
  height: 60px;
  margin: 0 auto 20px;
}
.assets-foot {
  height: 21px;
  background: #3f3f3f;
  display: flex;
  align-items: center;
  gap: 2px;
  padding: 0 15px 0 4px;
}
.slider {
  margin-left: auto;
  width: 55px;
  height: 10px;
  display: flex;
  justify-content: flex-end;
  background: linear-gradient(#5e5e5e, #5e5e5e) 0 4px / 100% 2px no-repeat;
}
.slider i {
  width: 10px;
  height: 10px;
  border-radius: 50%;
  background: #999;
}

/* inspector */
.inspector { width: 502px; }
.inspector .tab { width: 92px; padding-left: 8px; }
.inspector .tabs { padding-right: 12px; }
.asset-head {
  height: 55px;
  background: #3c3c3c;
  border-bottom: 1px solid #1f1f1f;
  display: flex;
  padding: 7px 5px 0 10px;
  color: #aaa;
}
.asset-ico {
  width: 24px;
  height: 20px;
  margin-top: 5px;
}
.asset-name {
  margin: -1px 0 0 12px;
  flex: 1;
  letter-spacing: 0.35px;
}
.asset-side {
  display: flex;
  flex-direction: column;
  align-items: flex-end;
  gap: 9px;
}
.open-btn {
  width: 42px;
  height: 17px;
  background: #585858;
  border: 1px solid #303030;
  border-radius: 3px;
  color: #e4e4e4;
}
.fill { flex: 1; }
.labels-head {
  height: 22px;
  border-top: 1px solid #1f1f1f;
  border-bottom: 1px solid #1f1f1f;
  background: #3c3c3c;
  padding-left: 7px;
  line-height: 22px;
  font-weight: 600;
  letter-spacing: 0.1px;
}
.labels {
  height: 49px;
  background: #3c3c3c;
  padding: 5px 4px 0;
}
.label-tag {
  width: 20px;
  height: 15px;
  margin-left: auto;
  border-radius: 8px;
  background: #214a87;
  color: #fff;
  display: flex;
  align-items: center;
  justify-content: center;
}
.bundle {
  margin-top: 7px;
  display: flex;
  align-items: center;
}
.bundle > span { width: 92px; }
.select {
  width: 93px;
  height: 18px;
  background: #515151;
  border: 1px solid #303030;
  border-radius: 3px;
  display: flex;
  align-items: center;
  justify-content: space-between;
  padding: 0 5px 0 2px;
  color: #e0e0e0;
}
.select.main {
  width: 304px;
  margin-right: 5px;
}

/* status bar */
.status {
  height: 22px;
  background: #191919;
  color: #d5a70f;
  display: flex;
  align-items: center;
  padding-left: 3px;
  white-space: pre;
  letter-spacing: -0.135px;
}
.warn { width: 14px; height: 13px; margin-right: 3px; }
.status-icons {
  margin-left: auto;
  margin-right: 1px;
  display: flex;
  color: #c4c4c4;
}
.status-icons i {
  width: 26px;
  height: 20px;
  border-left: 1px solid #262626;
  display: flex;
  align-items: center;
  justify-content: center;
}

/* windows taskbar */
.taskbar {
  height: 40px;
  padding-left: 1px;
  background: linear-gradient(90deg, #22373f, #213640 50%, #1d3042 70%, #1a2744 90%, #182545);
  display: flex;
  align-items: center;
  color: #fff;
  font-family: "Noto Sans", "Noto Sans CJK SC", sans-serif;
}
.app {
  width: 49px;
  height: 40px;
  padding: 8px 12px 0;
}
.app svg {
  width: 24px;
  height: 24px;
}
.app.run {
  background: linear-gradient(#76b9ed, #76b9ed) 4px 38px / 40px 2px no-repeat;
}
.app.multi {
  background: linear-gradient(90deg, #76b9ed 31px, #5585a8 31px) 4px 38px / 40px 2px no-repeat;
}
.tray {
  margin-left: auto;
  display: flex;
  align-items: center;
  gap: 8px;
}
.tray svg {
  width: 16px;
  height: 16px;
}
.ime { font-size: 16px; }
.pin {
  width: 16px;
  height: 16px;
  margin-left: 6px;
  margin-right: 13px;
  background: #fff;
  color: #000;
  font-size: 13px;
  line-height: 15px;
  text-align: center;
}
.clock {
  width: 66px;
  margin-right: 8px;
  display: flex;
  flex-direction: column;
  align-items: center;
  line-height: 19px;
  letter-spacing: 0.2px;
}
.notify {
  width: 45px;
  height: 40px;
  padding: 9px 0 0 7px;
  margin-right: 4px;
  border-right: 1px solid #6f7a8f;
}
.notify svg {
  width: 26px;
  height: 26px;
}

/* context menus */
.menu {
  position: absolute;
  background: #f2f2f2;
  border: 1px solid #ccc;
  padding: 2px;
  color: #000;
  font-family: "Noto Sans", sans-serif;
  font-size: 12px;
  letter-spacing: 0.17px;
  box-shadow: 4px 4px 4px -1px rgba(0, 0, 0, 0.55);
}
.main-menu {
  left: 706px;
  top: 152px;
  width: 336px;
}
.sub-menu {
  left: 1039px;
  top: 102px;
  width: 266px;
}
.item {
  height: 22px;
  line-height: 22px;
  padding: 0 15px 0 32px;
  display: flex;
  justify-content: space-between;
  align-items: center;
  white-space: pre;
}
.item.hot { background: #91c9f7; }
.item.off { color: #6d6d6d; }
.item .key { letter-spacing: 0.55px; }
.item svg {
  width: 5px;
  height: 8px;
  margin-right: -9px;
}
.sub-menu .item svg { margin-right: -6px; }
.sep {
  height: 7px;
  margin-left: 28px;
  border-top: 3px solid #f2f2f2;
  background: linear-gradient(#d7d7d7 1px, transparent 1px);
}

/* annotations */
.mark {
  position: absolute;
  border: 4px solid #ed1c24;
  border-radius: 2px;
}
.mark-create {
  left: 716px;
  top: 149px;
  width: 154px;
  height: 33px;
  box-shadow: inset 0 0 0 1px #f6e4e8;
}
.mark-folder {
  left: 1037px;
  top: 101px;
  width: 148px;
  height: 32px;
  box-shadow: inset 0 0 0 1px #f6e4e8;
}
.mark-blank {
  left: 326px;
  top: 734px;
  width: 62px;
  height: 68px;
}
.note {
  position: absolute;
  left: 418px;
  top: 760px;
  color: #ed1c24;
  font-family: "Noto Sans CJK SC", sans-serif;
  font-size: 25px;
  letter-spacing: 5.7px;
  white-space: nowrap;
}
.note div {
  height: 30px;
  line-height: 30px;
}
.note .latin, .note .dash {
  font-family: "DejaVu Sans Mono", monospace;
  line-height: 0;
  letter-spacing: 0.4px;
}
.note .dash {
  letter-spacing: 5px;
  margin-left: -2px;
}
```
FILE: script.js
```js
// "text|shortcut", ">" = submenu, "!" = disabled, "-" = separator
const contextItems = [
  '*Create>', 'Show in Explorer', 'Open', '!Delete', '!Rename', 'Copy Path|Alt+Ctrl+C', '-',
  '!Open Scene Additive', '-', '!View in Package Manager', '-',
  'Import New Asset...', 'Import Package>', 'Export Package...', '!Find References In Scene',
  'Find References In Project', 'Select Dependencies', '-',
  'Refresh|Ctrl+R', 'Reimport', '-', 'Reimport All', '-', '!Extract From Prefab', '-',
  'Update UXML Schema', '-', 'Generate Lighting|Ctrl+Shift+L', 'Open C# Project',
  'View in Import Activity Window', '-', 'Properties...|Alt+P'
];
const createItems = [
  '*Folder', '-', 'C# Script', '2D>', 'Visual Scripting>', 'Shader>', 'Shader Variant Collection',
  'Testing>', 'Playables>', 'Assembly Definition', 'Assembly Definition Reference', 'TextMeshPro>', 'Text>', '-',
  'Scene', 'Scene Template', '!Scene Template From Scene', 'Scene Template Pipeline', 'Prefab', '!Prefab Variant', '-',
  'Audio Mixer', '-', 'Material', '!Material Variant', 'Lens Flare', 'Render Texture', 'Lightmap Parameters',
  'Lighting Settings', 'Custom Render Texture', '-', 'Animator Controller', 'Animation',
  'Animator Override Controller', 'Avatar Mask', '-', 'Timeline', 'Signal', '-', 'Physic Material', '-',
  'GUI Skin', 'Custom Font', '-', 'Legacy>', 'UI Toolkit>', '-', 'Search>', 'Brush', 'Terrain Layer', 'Input Actions'
];

const chevron = '<svg viewBox="0 0 5 8"><path fill="none" stroke="#222" stroke-width="1.1" d="M.7.7L4.2 4 .7 7.3"/></svg>';

function renderMenu(id, items) {
  document.getElementById(id).innerHTML = items.map(item => {
    if (item === '-') return '<div class="sep"></div>';
    const cls = item[0] === '*' ? ' hot' : item[0] === '!' ? ' off' : '';
    const [text, key] = item.replace(/^[*!]/, '').split('|');
    const right = text.endsWith('>') ? chevron : key ? `<span class="key">${key}</span>` : '';
    return `<div class="item${cls}"><span>${text.replace('>', '')}</span>${right}</div>`;
  }).join('');
}

// [text, level class, fold state, icon, extra classes]
const hierarchy = [
  ['Main Camera', 'lvl3', 'none', 'cube', ''],
  ['Directional Light', 'lvl3', 'none', 'cube', ''],
  ['ARCamera', 'lvl3', 'none', 'cube', ''],
  ['ImageTarget', 'lvl3', 'open', 'cube', ''],
  ['TDA 洛天依旗袍 芒种 Ver1.00', 'lvl4', 'open', 'prefab', 'link changed'],
  ['467.!Root', 'lvl5', '', 'cube', 'link'],
  ['U_Char', 'lvl5', '', 'cube', 'link']
];
const project = [
  ['Favorites', 'lvl0', 'open', 'star', ''],
  ...['Modified', 'Conflicts', 'Excluded', 'Materials', 'Models', 'Prefabs'].map(n => ['All ' + n, 'lvl1', 'none', 'search', '']),
  ['Assets', 'lvl0', 'open', 'folder-open', 'gap selected'],
  ['Editor', 'lvl1', '', 'folder', ''],
  ['MMD4Mecanim', 'lvl1', '', 'folder', ''],
  ['Resources', 'lvl1', 'none', 'folder', ''],
  ['Scenes', 'lvl1', 'none', 'folder', ''],
  ['StreamingAssets', 'lvl1', '', 'folder', ''],
  ['TDA 洛天依旗袍 芒种 Ver1.00', 'lvl1', '', 'folder', ''],
  ['Packages', 'lvl0', '', 'folder', '']
];

function renderTree(id, rows) {
  document.getElementById(id).innerHTML = rows.map(([text, lvl, fold, icon, extra]) =>
    `<div class="row ${lvl} ${extra}"><i class="fold ${fold}"></i><svg><use href="#${icon}"/></svg>${text}</div>`
  ).join('');
}

renderMenu('contextMenu', contextItems);
renderMenu('createMenu', createItems);
renderTree('hierarchy', hierarchy);
renderTree('project', project);

document.getElementById('folders').innerHTML = ['Editor', 'MMD4Mecanim', 'Resources', 'Scenes', 'StreamingAssets']
  .map(name => `<div class="folder"><svg><use href="#big-folder"/></svg>${name}</div>`).join('');
```
